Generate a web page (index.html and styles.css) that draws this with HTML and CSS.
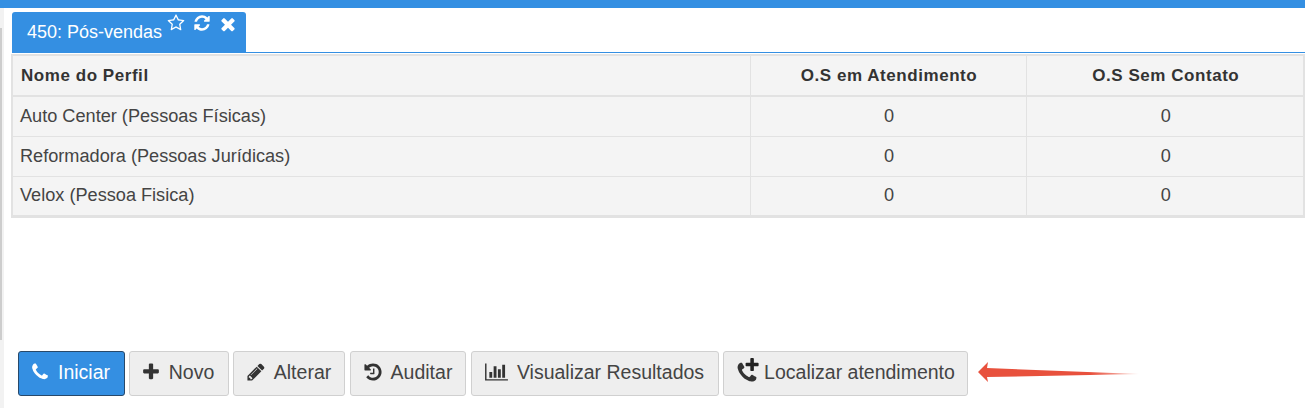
FILE: index.html
```html
<!DOCTYPE html>
<html lang="pt">
<head>
<meta charset="utf-8">
<title>Pós-vendas</title>
<link rel="stylesheet" href="styles.css">
</head>
<body>
<svg class="defs" width="0" height="0" aria-hidden="true">
  <defs>
    <path id="i-phone" d="M1600 1240q0 27-10 70.500t-21 68.500q-21 50-122 106-94 51-186 51-27 0-53-3.500t-57.500-12.500-47-14.500-55.500-20.500-49-18q-98-35-175-83-127-79-264-216t-216-264q-48-77-83-175-3-9-18-49t-20.500-55.500-14.500-47-12.500-57.500-3.500-53q0-92 51-186 56-101 106-122 25-11 68.500-21t70.500-10q14 0 21 3 18 6 53 76 11 19 30 54t35 63.500 31 53.500q3 4 17.500 25t21.500 35.500 7 28.500q0 20-28.500 50t-62 55-62 53-28.500 46q0 9 5 22.500t8.500 20.500 14 24 11.500 19q76 137 174 235t235 174q2 1 19 11.500t24 14 20.500 8.500 22.500 5q18 0 46-28.500t53-62 55-62 50-28.500q14 0 28.500 7t35.500 21.500 25 17.500q25 15 53.500 31t63.500 35 54 30q70 35 76 53 3 7 3 21z"/>
    <path id="i-plus" d="M1600 736v192q0 40-28 68t-68 28h-416v416q0 40-28 68t-68 28h-192q-40 0-68-28t-28-68v-416h-416q-40 0-68-28t-28-68v-192q0-40 28-68t68-28h416v-416q0-40 28-68t68-28h192q40 0 68 28t28 68v416h416q40 0 68 28t28 68z"/>
  </defs>
</svg>
<div class="topbar"></div>
<div class="side-thumb"></div>
<div class="page">
  <nav class="tabs">
    <div class="tab">
      <span class="tab-title">450: Pós-vendas</span>
      <span class="tab-icons">
        <svg class="tab-icon" viewBox="0 0 1792 1792"><path d="M1201 1004l306-297-422-62-189-382-189 382-422 62 306 297-73 421 378-199 377 199zm527-357q0 22-26 48l-363 354 86 500q1 7 1 20 0 50-41 50-19 0-40-12l-449-236-449 236q-22 12-40 12-21 0-31.500-14.500t-10.500-35.500q0-6 2-20l86-500-364-354q-25-27-25-48 0-37 56-46l502-73 225-455q19-41 49-41t49 41l225 455 502 73q56 9 56 46z"/></svg>
        <svg class="tab-icon" viewBox="0 0 1792 1792"><path d="M1639 1056q0 5-1 7-64 268-268 434.500t-478 166.500q-146 0-282.500-55t-243.500-157l-129 129q-19 19-45 19t-45-19-19-45v-448q0-26 19-45t45-19h448q26 0 45 19t19 45-19 45l-137 137q71 66 161 102t187 36q134 0 250-65t186-179q11-17 53-117 8-23 30-23h192q13 0 22.500 9.500t9.500 22.500zm25-800v448q0 26-19 45t-45 19h-448q-26 0-45-19t-19-45 19-45l138-138q-148-137-349-137-134 0-250 65t-186 179q-11 17-53 117-8 23-30 23h-199q-13 0-22.500-9.500t-9.500-22.500v-7q65-268 270-434.500t480-166.500q146 0 284 55.500t245 156.500l130-129q19-19 45-19t45 19 19 45z"/></svg>
        <svg class="tab-icon tab-icon-close" viewBox="0 0 1792 1792"><path d="M1490 1322q0 40-28 68l-136 136q-28 28-68 28t-68-28l-294-294-294 294q-28 28-68 28t-68-28l-136-136q-28-28-28-68t28-68l294-294-294-294q-28-28-28-68t28-68l136-136q28-28 68-28t68 28l294 294 294-294q28-28 68-28t68 28l136 136q28 28 28 68t-28 68l-294 294 294 294q28 28 28 68z"/></svg>
      </span>
    </div>
  </nav>
  <div class="panel">
    <table class="grid">
      <thead>
        <tr><th class="col-name">Nome do Perfil</th><th class="col-num">O.S em Atendimento</th><th class="col-num2">O.S Sem Contato</th></tr>
      </thead>
      <tbody>
        <tr><td>Auto Center (Pessoas Físicas)</td><td class="num">0</td><td class="num">0</td></tr>
        <tr><td>Reformadora (Pessoas Jurídicas)</td><td class="num">0</td><td class="num">0</td></tr>
        <tr><td>Velox (Pessoa Fisica)</td><td class="num">0</td><td class="num">0</td></tr>
      </tbody>
    </table>
  </div>
  <div class="toolbar">
    <button class="btn primary btn-iniciar"><svg class="ico" viewBox="0 0 1792 1792"><use href="#i-phone"/></svg><span>Iniciar</span></button>
    <button class="btn btn-novo"><svg class="ico" viewBox="0 0 1792 1792"><use href="#i-plus"/></svg><span>Novo</span></button>
    <button class="btn btn-alterar"><svg class="ico" viewBox="0 0 1792 1792"><path d="M491 1536l91-91-235-235-91 91v107h128v128h107zm523-928q0-22-22-22-10 0-17 7l-542 542q-7 7-7 17 0 22 22 22 10 0 17-7l542-542q7-7 7-17zm-54-192l416 416-832 832h-416v-416zm683 96q0 53-37 90l-166 166-416-416 166-165q36-38 90-38 53 0 91 38l235 234q37 39 37 91z"/></svg><span>Alterar</span></button>
    <button class="btn btn-auditar"><svg class="ico" viewBox="0 0 1792 1792"><path d="M1664 896q0 156-61 298t-164 245-245 164-298 61q-172 0-327-72.500t-264-204.500q-7-10-6.500-22.500t8.500-20.500l137-138q10-9 25-9 16 2 23 12 73 95 179 147t225 52q104 0 198.500-40.500t163.500-109.500 109.500-163.500 40.500-198.500-40.500-198.500-109.500-163.500-163.500-109.500-198.500-40.500q-98 0-188 35.500t-160 101.500l137 138q31 30 14 69-17 40-59 40h-448q-26 0-45-19t-19-45v-448q0-42 40-59 39-17 69 14l130 129q107-101 244.500-156.500t284.500-55.500q156 0 298 61t245 164 164 245 61 298zm-640-288v448q0 14-9 23t-23 9h-320q-14 0-23-9t-9-23v-64q0-14 9-23t23-9h224v-352q0-14 9-23t23-9h64q14 0 23 9t9 23z"/></svg><span>Auditar</span></button>
    <button class="btn btn-visualizar"><svg class="ico ico-wide" viewBox="0 0 2048 1792"><path d="M640 896v512h-256v-512h256zm384-512v1024h-256v-1024h256zm1024 1152v128h-2048v-1536h128v1408h1920zm-640-896v768h-256v-768h256zm384-384v1152h-256v-1152h256z"/></svg><span>Visualizar Resultados</span></button>
    <button class="btn btn-localizar"><svg class="ico ico-combo" viewBox="0 0 1792 1792"><use href="#i-phone"/><use href="#i-plus" class="combo-plus" transform="translate(658 -312) scale(.69)"/></svg><span>Localizar atendimento</span></button>
    <svg class="arrow" width="162" height="22" viewBox="0 0 162 22" aria-hidden="true">
      <defs>
        <linearGradient id="fade" x1="0" x2="1" y1="0" y2="0">
          <stop offset="0" stop-color="#e8513d"/>
          <stop offset=".7" stop-color="#e8513d"/>
          <stop offset="1" stop-color="#e8513d" stop-opacity=".25"/>
        </linearGradient>
      </defs>
      <polygon points="0,11 10,1 9,7 161,13 9,16 10,21" fill="url(#fade)"/>
    </svg>
  </div>
</div>
</body>
</html>
```

FILE: styles.css
```css
* { box-sizing: border-box; }
html, body { height: 100%; }
body {
  margin: 0;
  background: #fff;
  font-family: "Liberation Sans", Arial, sans-serif;
  color: #333;
  overflow: hidden;
  display: flex;
  flex-direction: column;
}
.defs { display: block; height: 0; }
.topbar { height: 8px; background: #348fe2; flex: none; }
.side-thumb {
  position: absolute;
  left: 0;
  top: 28px;
  width: 2px;
  height: 312px;
  background: #cdcdcd;
}
.page {
  flex: 1;
  padding: 4px 0 0 8px;
  display: flex;
  flex-direction: column;
  border-left: 4px solid #f2f2f2;
}
.tabs { height: 41px; border-bottom: 1px solid #348fe2; display: flex; flex: none; }
.tab {
  width: 234px;
  height: 41px;
  background: #348fe2;
  border-radius: 3px 3px 0 0;
  color: #fff;
  display: flex;
  padding-left: 15px;
}
.tab-title { font-size: 18px; line-height: 20px; padding-top: 10px; }
.tab-icons { display: flex; gap: 8px; padding: 2px 0 0 5px; align-items: flex-start; }
.tab-icon { width: 18px; height: 18px; fill: #fff; }
.tab-icon-close { width: 20px; height: 20px; margin-left: -1px; }
.panel { flex: none; margin: 1px 0 0 -1px; }
.grid {
  width: 1294px;
  border-collapse: collapse;
  table-layout: fixed;
  background: #f4f4f4;
  font-size: 18.15px;
  border: 2px solid #e2e2e2;
  border-bottom-width: 3px;
}
.grid th {
  height: 41px;
  padding: 0 7px 0 9px;
  font-size: 17px;
  font-weight: 700;
  letter-spacing: .55px;
  text-align: center;
  border: 1px solid #e2e2e2;
  border-bottom: 2px solid #e2e2e2;
}
.grid th.col-name { text-align: left; width: 738px; padding-left: 8px; }
.grid th.col-num { width: 276px; }
.grid td {
  height: 40px;
  padding: 0 7px;
  border: 1px solid #e2e2e2;
  color: #444;
}
.grid td.num { text-align: center; padding: 0 7px 0 9px; }
.toolbar {
  display: flex;
  gap: 4px;
  margin-top: 133px;
  margin-left: 6px;
  align-items: center;
}
.btn {
  height: 45px;
  padding: 0 1px 2px 0;
  border: 1px solid #d0d0d0;
  border-radius: 3px;
  background: #eee;
  color: #444;
  font: 19.5px "Liberation Sans", Arial, sans-serif;
  display: flex;
  align-items: center;
  justify-content: center;
  gap: 8px;
  flex: none;
}
.btn.primary { background: #348fe2; border-color: #28496a; color: #fff; }
.btn-iniciar { width: 107px; padding-right: 3px; }
.btn-novo { width: 100px; padding-right: 3px; }
.btn-alterar { width: 112px; }
.btn-auditar { width: 116px; margin-left: 1px; }
.btn-visualizar { width: 248px; margin-left: 1px; gap: 9px; }
.btn-localizar { width: 245px; gap: 5px; }
.ico { width: 20px; height: 20px; fill: #333; flex: none; }
.ico-wide { width: 23px; }
.ico-combo { width: 24px; height: 24px; margin-top: 2px; overflow: visible; }
.primary .ico { fill: #fff; }
.combo-plus { stroke: #eee; stroke-width: 100px; paint-order: stroke; fill: #222; }
.arrow { flex: none; margin: 0 0 3px 6px; }
```
